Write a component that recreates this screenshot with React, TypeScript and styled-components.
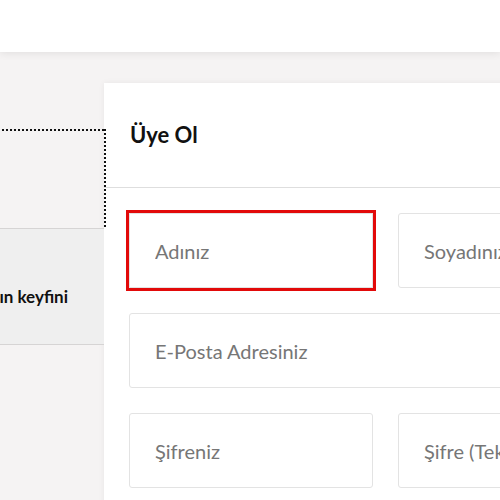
import React from "react";
import styled, { createGlobalStyle } from "styled-components";

const Global = createGlobalStyle`
  html, body { margin: 0; padding: 0; }
  body {
    width: 500px;
    height: 500px;
    overflow: hidden;
    background: #f5f3f3;
    font-family: Lato, "Noto Sans", sans-serif;
  }
  * { box-sizing: border-box; }
`;

const Header = styled.header`
  height: 52px;
  background: #ffffff;
  box-shadow: 0 1px 8px rgba(0, 0, 0, 0.09);
  position: relative;
  z-index: 2;
`;

const Main = styled.main`
  display: flex;
  align-items: flex-start;
  padding-top: 31px;
  height: 448px;
  background: #f5f3f3;
`;

const Side = styled.nav`
  flex: 0 0 104px;
  width: 104px;
  margin-top: 48px;
  display: flex;
  flex-direction: column;
  position: relative;
  z-index: 1;
`;

const dot = "#111";

const Tab = styled.div<{ $focused?: boolean; $shade?: boolean }>`
  position: relative;
  display: flex;
  justify-content: flex-end;
  align-items: center;
  white-space: nowrap;
  padding-right: 36px;
  border-bottom: 1px solid #d6d4d4;
  background: ${(p) => (p.$shade ? "#efefef" : "transparent")};
  font-size: 17px;
  font-weight: 700;
  color: #111;

  &::after {
    content: "";
    display: ${(p) => (p.$focused ? "block" : "none")};
    position: absolute;
    top: -2px;
    left: -2px;
    right: -2px;
    bottom: -1px;
    pointer-events: none;
    background:
      repeating-linear-gradient(90deg, ${dot} 0 2px, transparent 2px 4px) top left / 100% 2px no-repeat,
      repeating-linear-gradient(180deg, ${dot} 0 2px, transparent 2px 4px) top right / 2px 100% no-repeat;
  }
`;

const Card = styled.section`
  flex: 0 0 600px;
  background: #ffffff;
  box-shadow: 0 0 6px rgba(0, 0, 0, 0.06);
  min-height: 420px;
`;

const CardHead = styled.div`
  height: 105px;
  display: flex;
  align-items: center;
  padding-left: 26px;
  border-bottom: 1px solid #dedede;
`;

const Title = styled.h1`
  margin: 0;
  font-size: 22px;
  font-weight: 700;
  color: #111;
  padding-bottom: 1px;
`;

const Form = styled.form`
  display: grid;
  grid-template-columns: 244px 244px;
  grid-auto-rows: 75px;
  gap: 25px;
  padding: 25px 25px;
`;

const Field = styled.input<{ $wide?: boolean; $active?: boolean }>`
  grid-column: ${(p) => (p.$wide ? "1 / span 2" : "auto")};
  border: 1px solid #e3e3e3;
  border-radius: ${(p) => (p.$active ? "0" : "3px")};
  padding: 0 0 0 25px;
  font-family: Lato, "Noto Sans", sans-serif;
  font-size: 20px;
  color: #333;
  background: #fff;
  outline: ${(p) => (p.$active ? "3px solid #e20a0a" : "none")};
  &::placeholder { color: #767676; }
`;

export default function App() {
  return (
    <>
      <Global />
      <Header />
      <Main>
        <Side>
          <Tab $focused style={{ height: 98 }} />
          <Tab $shade style={{ height: 116, paddingTop: 19 }}>
            Ayrıcalıkların keyfini
          </Tab>
        </Side>
        <Card>
          <CardHead>
            <Title>Üye Ol</Title>
          </CardHead>
          <Form>
            <Field $active placeholder="Adınız" />
            <Field placeholder="Soyadınız" />
            <Field $wide placeholder="E-Posta Adresiniz" />
            <Field type="password" placeholder="Şifreniz" />
            <Field type="password" placeholder="Şifre (Tekrar)" />
          </Form>
        </Card>
      </Main>
    </>
  );
}
